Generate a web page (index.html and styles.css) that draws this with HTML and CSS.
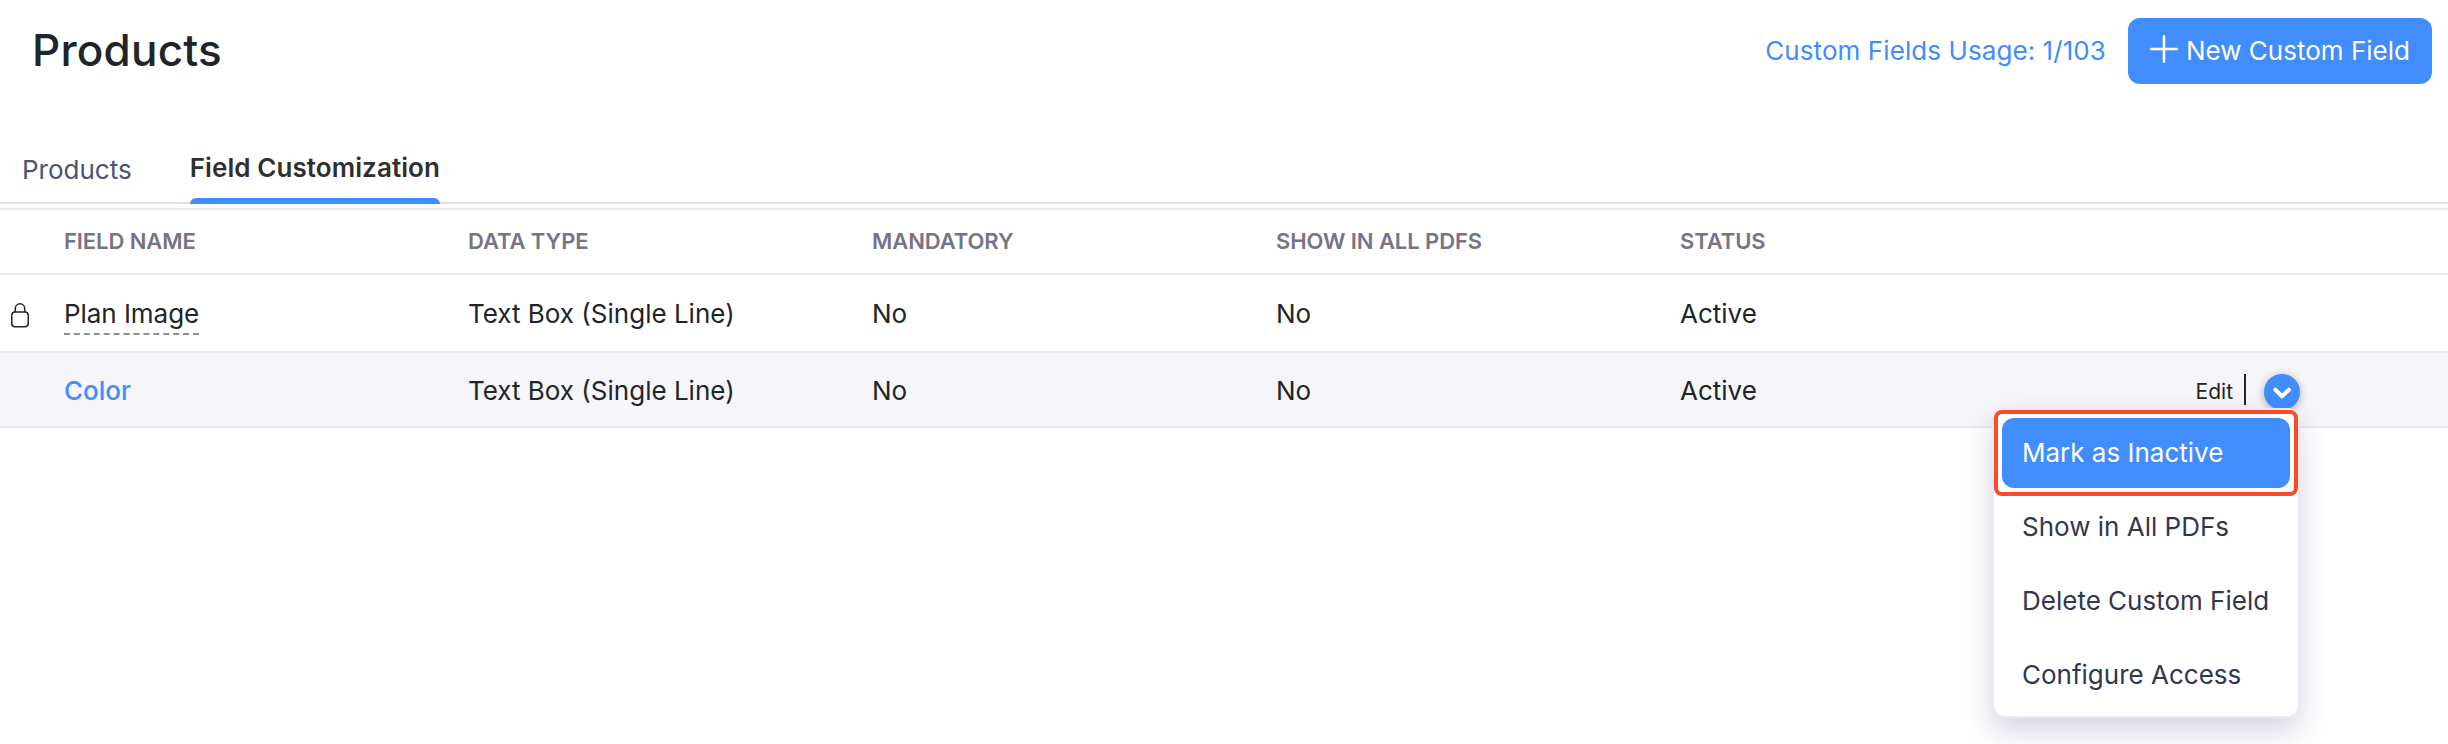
FILE: index.html
```html
<!DOCTYPE html>
<html lang="en">
<head>
<meta charset="UTF-8">
<title>Products</title>
<link rel="stylesheet" href="styles.css">
</head>
<body>
<header class="page-header">
  <h1 class="page-title">Products</h1>
  <div class="header-actions">
    <a class="usage-link">Custom Fields Usage: 1/103</a>
    <button class="new-button">
      <svg class="plus-icon" width="28" height="28" viewBox="0 0 28 28" fill="none" stroke="currentColor" stroke-width="2.6" stroke-linecap="round">
        <path d="M14 1.3v25.4M1.3 14h25.4"/>
      </svg>
      <span>New Custom Field</span>
    </button>
  </div>
</header>

<nav class="tabs">
  <a class="tab">Products</a>
  <a class="tab active">Field Customization</a>
</nav>

<div class="table">
  <div class="row head">
    <div></div>
    <div>Field Name</div>
    <div>Data Type</div>
    <div>Mandatory</div>
    <div>Show in all PDFs</div>
    <div>Status</div>
  </div>
  <div class="row">
    <div class="lock">
      <svg width="20" height="26" viewBox="0 0 20 26" fill="none" stroke="#212529" stroke-width="1.5">
        <rect x="1.75" y="9" width="16.5" height="14.8" rx="3.2"/>
        <path d="M5.3 9V5.5a4.7 4.7 0 0 1 9.4 0V9"/>
      </svg>
    </div>
    <div><span class="system-field">Plan Image</span></div>
    <div>Text Box (Single Line)</div>
    <div>No</div>
    <div>No</div>
    <div>Active</div>
  </div>
  <div class="row hovered">
    <div></div>
    <div><a class="field-link">Color</a></div>
    <div>Text Box (Single Line)</div>
    <div>No</div>
    <div>No</div>
    <div>Active</div>
    <div class="row-actions">
      <a class="edit-link">Edit</a>
      <span class="divider"></span>
      <button class="more-button">
        <svg width="36" height="36" viewBox="0 0 36 36" fill="none" stroke="#fff" stroke-width="4" stroke-linecap="round" stroke-linejoin="round">
          <path d="M11.3 15.7l6.7 6.6 6.9-6.6"/>
        </svg>
      </button>
      <div class="menu">
        <div class="menu-item selected">Mark as Inactive</div>
        <div class="menu-item">Show in All PDFs</div>
        <div class="menu-item">Delete Custom Field</div>
        <div class="menu-item">Configure Access</div>
      </div>
    </div>
  </div>
</div>
</body>
</html>
```

FILE: styles.css
```css
* {
  box-sizing: border-box;
}
body {
  min-height: 744px;
  margin: 0;
  background: #fff;
  color: #212529;
  font-family: Inter, "Liberation Sans", sans-serif;
  font-size: 26px;
  line-height: 32px;
}
button {
  border: none;
  font: inherit;
  cursor: pointer;
}
.page-header {
  display: flex;
  justify-content: space-between;
  align-items: center;
  height: 102px;
  padding: 0 16px 0 32px;
}
.page-title {
  margin: -2px 0 0;
  font-size: 44px;
  font-weight: 500;
  letter-spacing: 0.2px;
  line-height: 54px;
}
.header-actions {
  display: flex;
  align-items: center;
  gap: 22px;
}
.usage-link {
  color: #408dfb;
  letter-spacing: 0.08px;
}
.new-button {
  display: flex;
  align-items: center;
  gap: 8px;
  width: 304px;
  height: 66px;
  padding: 0 0 0 22px;
  border-radius: 12px;
  background: #408dfb;
  color: #fff;
  white-space: nowrap;
}
.plus-icon {
  margin-top: -4px;
}
.tabs {
  display: flex;
  gap: 58px;
  height: 102px;
  padding: 50px 0 0 22px;
  border-bottom: 2px solid #dee2e6;
}
.tab {
  height: 52px;
  padding-top: 2px;
  color: #4b5275;
}
.tab.active {
  position: relative;
  padding-top: 0;
  color: #2f2f2f;
  font-weight: 600;
  letter-spacing: 0.08px;
}
.tab.active::after {
  content: "";
  position: absolute;
  left: 0;
  right: 0;
  bottom: 0;
  height: 6px;
  border-radius: 6px 6px 0 0;
  background: #408dfb;
}
.table {
  margin-top: 4px;
  border-top: 2px solid #e9e9f2;
}
.row {
  display: grid;
  grid-template-columns: 64px repeat(5, 404px) 1fr;
  align-items: center;
  height: 78px;
  padding-top: 2px;
  border-bottom: 2px solid #e9e9f2;
}
.row.head {
  height: 65px;
  padding: 0 0 1px;
  color: #777386;
  font-size: 22px;
  font-weight: 600;
  letter-spacing: -0.08px;
  text-transform: uppercase;
}
.row.hovered {
  position: relative;
  height: 75px;
  background: #f5f5fa;
}
.lock {
  display: flex;
  padding: 4px 0 0 10px;
}
.system-field {
  display: block;
  width: 135px;
  margin-top: 5px;
  padding-bottom: 3px;
  border-bottom: 2px dashed #909090;
  letter-spacing: -0.05px;
  white-space: nowrap;
}
.field-link {
  color: #408dfb;
  font-weight: 500;
}
.row-actions {
  display: flex;
  align-items: center;
  justify-content: flex-end;
  padding: 3px 148px 0 0;
}
.edit-link {
  font-size: 21px;
}
.divider {
  width: 2px;
  height: 31px;
  margin: -5px 18px 0 11px;
  background: #212529;
}
.more-button {
  display: flex;
  width: 36px;
  height: 36px;
  padding: 0;
  border-radius: 50%;
  background: #408dfb;
  box-shadow: 0 2px 10px rgba(0, 0, 0, 0.3);
}
.menu {
  position: absolute;
  top: 55px;
  right: 148px;
  display: flex;
  flex-direction: column;
  gap: 4px;
  width: 308px;
  height: 310px;
  padding: 8px;
  border: 2px solid #e9e9f2;
  border-radius: 12px;
  background: #fff;
  box-shadow: 0 14px 30px rgba(60, 40, 110, 0.2);
}
.menu-item {
  height: 70px;
  padding: 0 20px;
  border-radius: 12px;
  color: #32364f;
  line-height: 70px;
  white-space: nowrap;
}
.menu-item.selected {
  position: relative;
  background: #408dfb;
  color: #fff;
}
/* highlight frame around the current option */
.menu-item.selected::after {
  content: "";
  position: absolute;
  inset: -8px;
  border: 4px solid #fa4b28;
  border-radius: 8px;
}
```
